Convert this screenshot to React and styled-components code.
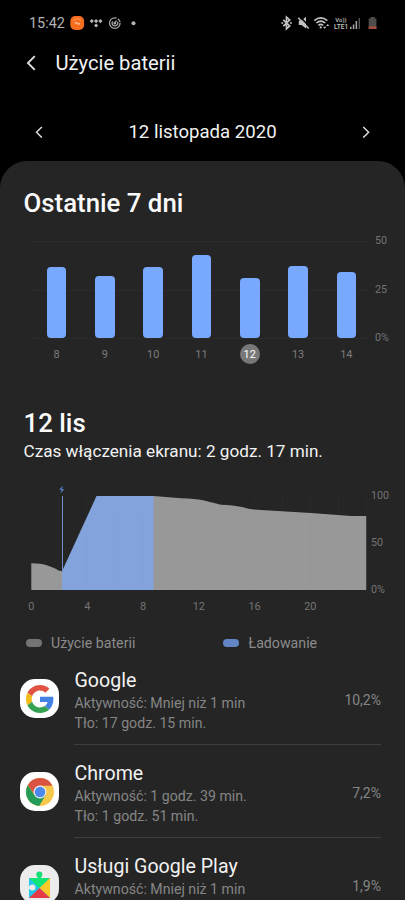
import React from "react";
import styled, { createGlobalStyle } from "styled-components";

const GlobalStyle = createGlobalStyle`
  * { box-sizing: border-box; }
  html, body { margin: 0; background: #000; }
  body { font-family: Roboto, "Noto Sans", sans-serif; overflow: hidden; }
  svg { display: block; flex: none; }
`;

const Screen = styled.main`
  width: 405px;
  height: 900px;
  overflow: hidden;
  display: flex;
  flex-direction: column;
  background: #000;
  color: #f2f2f2;
`;

const StatusBar = styled.div`
  flex: none;
  height: 46px;
  padding: 0 27px 0 29px;
  display: flex;
  align-items: center;
  justify-content: space-between;
`;

const StatusGroup = styled.div`
  display: flex;
  align-items: center;
`;

const Clock = styled.span`
  width: 41px;
  padding-top: 1px;
  font-size: 14.4px;
  line-height: 21px;
  color: #b4b4b4;
  white-space: nowrap;
`;

const Header = styled.header`
  flex: none;
  height: 34px;
  padding-left: 26px;
  display: flex;
  align-items: center;
  gap: 19px;
`;

const HeaderTitle = styled.h1`
  margin: 0;
  font-size: 20.2px;
  font-weight: 400;
  line-height: 28px;
  white-space: nowrap;
`;

const DateNav = styled.nav`
  flex: none;
  height: 81px;
  padding: 23px 35px 0;
  display: flex;
  align-items: center;
  justify-content: space-between;
`;

const DateLabel = styled.span`
  font-size: 18.6px;
  line-height: 24px;
  white-space: nowrap;
`;

const Panel = styled.section`
  flex: 1;
  min-height: 0;
  overflow: hidden;
  border-radius: 27px 27px 0 0;
  background: #252525;
  padding-top: 26px;
`;

const SectionTitle = styled.h2`
  margin: 0;
  padding: 0 0 1px 23.5px;
  font-size: 25.8px;
  font-weight: 500;
  line-height: 32px;
  color: #fafafa;
  white-space: nowrap;
`;

const WeekChart = styled.div`
  display: flex;
  height: 150px;
  margin-top: 14px;
  padding: 7px 0 0 32px;
`;

const WeekPlot = styled.div`
  display: grid;
  grid-template-columns: repeat(7, 48.3px);
  width: 338px;
  height: 98px;
  background:
    linear-gradient(#2b2b2b, #2b2b2b) 0 0 / 336px 1px no-repeat,
    linear-gradient(#2b2b2b, #2b2b2b) 0 49px / 336px 1px no-repeat,
    linear-gradient(#2b2b2b, #2b2b2b) 0 97px / 336px 1px no-repeat;
`;

const Day = styled.div`
  display: flex;
  flex-direction: column;
  align-items: center;
  padding-left: 0.8px;
`;

const BarTrack = styled.div`
  flex: none;
  height: 97px;
  display: flex;
  align-items: flex-end;
`;

const Bar = styled.div`
  width: 19.6px;
  height: ${(p) => p.$height}px;
  border-radius: 4px;
  background: #79a9ff;
`;

const DayLabel = styled.span`
  flex: none;
  margin-top: 6px;
  width: 20px;
  height: 20px;
  border-radius: 50%;
  display: flex;
  align-items: center;
  justify-content: center;
  font-size: 10.9px;
  color: ${(p) => (p.$active ? "#fff" : "#7c7c7c")};
  background: ${(p) => (p.$active ? "#787878" : "transparent")};
`;

const Scale = styled.div`
  display: flex;
  flex-direction: column;
  justify-content: space-between;
  font-size: 10.7px;
  line-height: 12px;
  color: #747474;
`;

const WeekScale = styled(Scale)`
  height: 109px;
  margin-top: -6px;
  padding-left: 5px;
`;

const DaySection = styled.div`
  padding-top: 23px;
`;

const ScreenTime = styled.p`
  margin: 0;
  padding: 0 0 0 23.5px;
  font-size: 17.15px;
  line-height: 22px;
  white-space: nowrap;
`;

const DayChart = styled.div`
  display: flex;
  height: 106px;
  margin-top: 23px;
  padding-left: 31px;
`;

const DayScale = styled(Scale)`
  height: 106px;
  margin-top: 5px;
  padding-left: 4px;
`;

const Hours = styled.div`
  display: grid;
  grid-template-columns: repeat(6, 55.8px);
  margin: 9px 0 0 3.5px;
  font-size: 10.9px;
  line-height: 14px;
  text-align: center;
  color: #747474;
`;

const Legend = styled.div`
  display: grid;
  grid-template-columns: 197.5px 1fr;
  margin-top: 19px;
  padding-left: 25.5px;
`;

const LegendItem = styled.div`
  display: flex;
  align-items: center;
  gap: 9.5px;
  font-size: 14.2px;
  line-height: 20px;
  color: #8b8b8b;
`;

const Swatch = styled.i`
  width: 16px;
  height: 8px;
  margin-top: -1px;
  border-radius: 4px;
  background: ${(p) => p.$color};
`;

const AppList = styled.div`
  margin-top: 12px;
`;

const AppRow = styled.div`
  height: 93px;
  padding: 0 24px 0 20px;
  display: flex;
`;

const AppIcon = styled.div`
  flex: none;
  width: 39px;
  height: 39px;
  margin-top: 14px;
  border-radius: 15px;
  display: flex;
  align-items: center;
  justify-content: center;
  background: ${(p) => p.$background || "#fff"};
`;

const AppBody = styled.div`
  flex: 1;
  height: 80px;
  margin-left: 15px;
  padding-left: 0.5px;
  display: flex;
  justify-content: space-between;
  border-bottom: 1px solid #3e3e3e;
`;

const AppName = styled.h3`
  margin: 3px 0 0;
  font-size: 19.6px;
  font-weight: 400;
  line-height: 26px;
  white-space: nowrap;
`;

const AppDetail = styled.p`
  margin: 0;
  font-size: 14.15px;
  line-height: 19.5px;
  color: #858585;
  white-space: nowrap;
`;

const Percent = styled.span`
  padding-top: 25px;
  font-size: 14px;
  line-height: 20px;
  color: #858585;
`;

function Chevron({ left, size }) {
  return (
    <svg width={size * 0.65} height={size} viewBox="0 0 11 17" fill="none" stroke="#e2e2e2" strokeWidth="1.9">
      <path d={left ? "M9.3 1.2 2 8.5l7.3 7.3" : "m1.7 1.2 7.3 7.3-7.3 7.3"} />
    </svg>
  );
}

function NotificationIcons() {
  return (
    <svg width="72" height="16" viewBox="70 15 72 16" fill="none">
      <rect x="70.3" y="16" width="13.8" height="14" rx="5" fill="#f66d20" />
      <path d="M73.2 20.5q4-3.5 7.7 0" stroke="#ff9a56" />
      <path d="M74.7 23.3q1.3-1.5 2.6 0t2.6 0" stroke="#ffc096" strokeWidth="1.3" />
      <path
        d="m91.8 19 2.1 2.1-2.1 2.1-2.1-2.1zm4.3 0 2.1 2.1-2.1 2.1-2.1-2.1zm4.3 0 2.1 2.1-2.1 2.1-2.1-2.1zm-4.3 4.4 2.1 2.1-2.1 2.1-2.1-2.1z"
        fill="#b4b4b4"
      />
      <g stroke="#a8a8a8" strokeWidth="1.3">
        <circle cx="114.8" cy="23.1" r="5.3" strokeDasharray="26 1.5 4 1.8" />
        <path d="M112.6 21.3a2.9 2.9 0 1 0 5 .5M114.8 23.2l1.8-2.7" />
        <circle cx="114.8" cy="23.2" r=".7" fill="#a8a8a8" />
      </g>
      <circle cx="133.5" cy="23.2" r="2" fill="#b5b5b5" />
    </svg>
  );
}

const NetworkBadge = styled.div`
  width: 16px;
  margin-left: 2px;
  display: flex;
  flex-direction: column;
  align-items: center;
  font-size: 6px;
  line-height: 7px;
  font-weight: 500;
  color: #c4c4c4;
  white-space: nowrap;
`;

const NetworkType = styled.span`
  font-size: 6.6px;
  line-height: 8px;
`;

function ConnectivityIcons() {
  return (
    <svg width="50" height="16" viewBox="281 15 50 16" fill="none" stroke="#c2c2c2">
      <path d="m283.3 19.8 6.4 6.2-3.2 2.8V17.2l3.2 2.8-6.4 6.2" strokeWidth="1.7" />
      <path d="M281.3 23h1.9m6.8 0h1.9" strokeWidth="1.7" />
      <path d="M298.8 20.5h2.7l4.5-3.8v11.8l-4.5-3.5h-2.7z" fill="#c2c2c2" stroke="none" />
      <path d="m299.8 16.5 10 10.5" stroke="#000" strokeWidth="1.6" />
      <path d="m298.3 17.8 10.4 10.7" strokeWidth="1.5" />
      <path d="M314.3 20.6q6.5-5.4 13 0M316.3 23q4.5-3.8 9 0M318.4 25.3q2.4-2 4.7 0" strokeWidth="1.6" />
      <circle cx="320.7" cy="27.4" r="1.1" fill="#c2c2c2" stroke="none" />
      <path d="m322.9 26.8 1.8 2 1.8-2zm3.2-.9 1.6-2 1.6 2z" fill="#c2c2c2" stroke="none" />
    </svg>
  );
}

function SignalBattery() {
  return (
    <svg width="29" height="16" viewBox="349 15 29 16">
      <path d="M350 26.7h1.5V29H350zm2.8-2.2h1.5V29h-1.5zm2.8-3.5h1.5v8h-1.5z" fill="#aaa" />
      <path d="M358.6 18h1.3v11h-1.3z" fill="#5c5c5c" />
      <path d="M370.7 17h4v1.5h1.7V29h-7.7V18.5h2z" fill="#504c4c" />
      <path d="M368.7 26.3h7.7V29h-7.7z" fill="#a44c3e" />
    </svg>
  );
}

function GoogleLogo() {
  return (
    <svg width="28" height="28" viewBox="0 0 48 48">
      <path fill="#e05244" d="M24 9.5c3.54 0 6.71 1.22 9.21 3.6l6.85-6.85C35.9 2.38 30.47 0 24 0 14.62 0 6.51 5.38 2.56 13.22l7.98 6.19C12.43 13.72 17.74 9.5 24 9.5z" />
      <path fill="#4381e5" d="M46.98 24.55c0-1.57-.15-3.09-.38-4.55H24v9.02h12.94c-.58 2.96-2.26 5.48-4.78 7.18l7.73 6c4.51-4.18 7.09-10.36 7.09-17.65z" />
      <path fill="#f4bb18" d="M10.53 28.59c-.48-1.45-.76-2.99-.76-4.59s.27-3.14.76-4.59l-7.98-6.19C.92 16.46 0 20.12 0 24c0 3.88.92 7.54 2.56 10.78l7.97-6.19z" />
      <path fill="#35a152" d="M24 48c6.48 0 11.93-2.13 15.89-5.81l-7.73-6c-2.15 1.45-4.92 2.3-8.16 2.3-6.26 0-11.57-4.22-13.47-9.91l-7.98 6.19C6.51 42.62 14.62 48 24 48z" />
    </svg>
  );
}

function ChromeLogo() {
  return (
    <svg width="28" height="28" viewBox="0 0 48 48">
      <circle cx="24" cy="24" r="24" fill="#f6c94c" />
      <path fill="#249b58" d="M3.2 12A24 24 0 0 0 22.5 48L33.5 29.5 24 24l-9.5 5.5z" />
      <path fill="#d95343" d="M3.2 12A24 24 0 0 1 45.4 13.2H24A11 11 0 0 0 14 28z" />
      <circle cx="24" cy="24" r="11" fill="#e9eef4" />
      <circle cx="24" cy="24" r="9" fill="#4a89eb" />
    </svg>
  );
}

function PlayServicesLogo() {
  return (
    <svg width="21" height="28" viewBox="0 0 21 28">
      <path d="M0 7h21v20H0z" fill="#20c6e7" />
      <path d="m0 7 10.5 10L21 7z" fill="#10e477" />
      <path d="M21 7v20L10.5 17z" fill="#fbc928" />
      <path d="m0 27 10.5-10L21 27z" fill="#e63a48" />
      <circle cx="10.3" cy="3.6" r="3" fill="#12df76" />
      <path d="M8.5 5h3.6v3H8.5z" fill="#12df76" />
      <circle cx="3.4" cy="16.5" r="3" fill="#ececec" />
      <path d="M0 15h3v3H0z" fill="#ececec" />
    </svg>
  );
}

function BatteryGraph() {
  const gridX = Array.from({ length: 13 }, (_, i) => i * 27.95);
  return (
    <svg width="336" height="106" viewBox="0 0 336 105" preserveAspectRatio="none">
      {gridX.map((x) => (
        <path key={x} d={`M${x} 11V104`} stroke="#2a2a2a" />
      ))}
      <path d="M.3 77.5C14 77.5 18 80.5 23 82.3c3 1.2 4.5 3 7 3h2V104H.3z" fill="#989898" />
      <path d="M31 104V85.5l34.5-74.5H123v93z" fill="#82a3db" />
      <path d="M122.5 104V11L150 13.2q14 .5 22 2l18 4.3q12 .2 21 2.3 8 2.8 19 3l50 3 40 2.8h15.2V104z" fill="#989898" />
      {gridX.slice(1, 12).map((x) => (
        <path key={x} d={`M${x} 30V104`} stroke="#000" strokeOpacity=".014" />
      ))}
      <path d="M31.5 11V86" stroke="#718fc6" />
      <path d="M31.7.8 28.2 4.8h2.3l-.9 3.4 3.8-4h-2.3z" fill="#5680c7" />
    </svg>
  );
}

const week = [
  ["8", 71.5],
  ["9", 62],
  ["10", 71],
  ["11", 83.5],
  ["12", 60.5],
  ["13", 72],
  ["14", 66.5],
];

const apps = [
  { name: "Google", active: "Mniej niż 1 min", idle: "17 godz. 15 min.", percent: "10,2%", Logo: GoogleLogo },
  { name: "Chrome", active: "1 godz. 39 min.", idle: "1 godz. 51 min.", percent: "7,2%", Logo: ChromeLogo },
  {
    name: "Usługi Google Play",
    active: "Mniej niż 1 min",
    percent: "1,9%",
    Logo: PlayServicesLogo,
    background: "#ececec",
  },
];

export default function App() {
  return (
    <Screen>
      <GlobalStyle />
      <StatusBar>
        <StatusGroup>
          <Clock>15:42</Clock>
          <NotificationIcons />
        </StatusGroup>
        <StatusGroup>
          <ConnectivityIcons />
          <NetworkBadge>
            <span>Vo))</span>
            <NetworkType>LTE1</NetworkType>
          </NetworkBadge>
          <SignalBattery />
        </StatusGroup>
      </StatusBar>
      <Header>
        <Chevron left size={16} />
        <HeaderTitle>Użycie baterii</HeaderTitle>
      </Header>
      <DateNav>
        <Chevron left size={12.5} />
        <DateLabel>12 listopada 2020</DateLabel>
        <Chevron size={12.5} />
      </DateNav>
      <Panel>
        <SectionTitle>Ostatnie 7 dni</SectionTitle>
        <WeekChart>
          <WeekPlot>
            {week.map(([day, height]) => (
              <Day key={day}>
                <BarTrack>
                  <Bar $height={height} />
                </BarTrack>
                <DayLabel $active={day === "12"}>{day}</DayLabel>
              </Day>
            ))}
          </WeekPlot>
          <WeekScale>
            <span>50</span>
            <span>25</span>
            <span>0%</span>
          </WeekScale>
        </WeekChart>
        <DaySection>
          <SectionTitle>12 lis</SectionTitle>
          <ScreenTime>Czas włączenia ekranu: 2 godz. 17 min.</ScreenTime>
          <DayChart>
            <BatteryGraph />
            <DayScale>
              <span>100</span>
              <span>50</span>
              <span>0%</span>
            </DayScale>
          </DayChart>
          <Hours>
            {[0, 4, 8, 12, 16, 20].map((hour) => (
              <span key={hour}>{hour}</span>
            ))}
          </Hours>
          <Legend>
            <LegendItem>
              <Swatch $color="#747474" />
              Użycie baterii
            </LegendItem>
            <LegendItem>
              <Swatch $color="#6286c5" />
              Ładowanie
            </LegendItem>
          </Legend>
        </DaySection>
        <AppList>
          {apps.map(({ name, active, idle, percent, Logo, background }) => (
            <AppRow key={name}>
              <AppIcon $background={background}>
                <Logo />
              </AppIcon>
              <AppBody>
                <div>
                  <AppName>{name}</AppName>
                  <AppDetail>Aktywność: {active}</AppDetail>
                  {idle && <AppDetail>Tło: {idle}</AppDetail>}
                </div>
                <Percent>{percent}</Percent>
              </AppBody>
            </AppRow>
          ))}
        </AppList>
      </Panel>
    </Screen>
  );
}
